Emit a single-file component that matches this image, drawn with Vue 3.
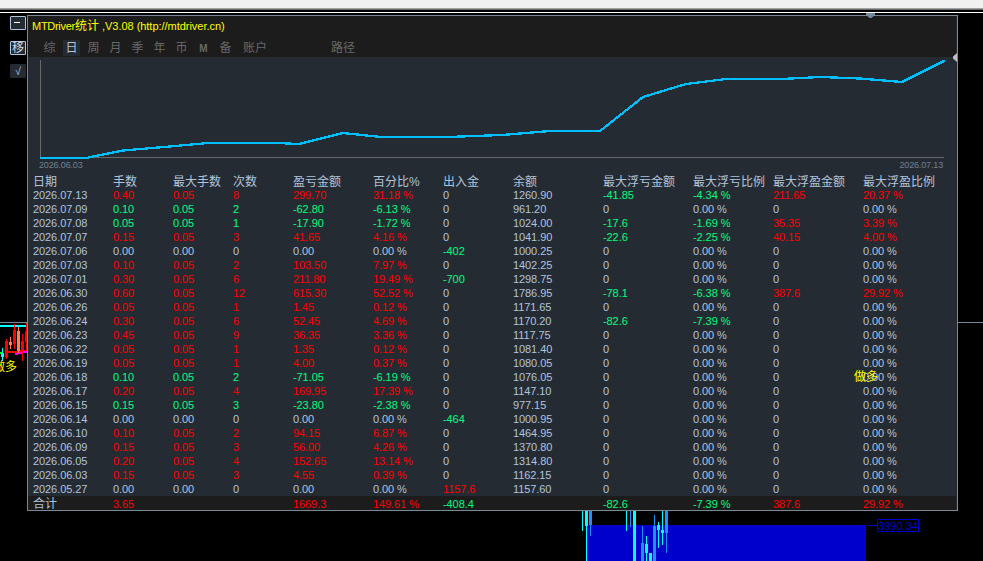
<template>
  <div class="terminal">
    <div class="toolbar-edge"></div>

    <svg class="market" width="983" height="561" shape-rendering="crispEdges">
      <rect x="0" y="322" width="983" height="1" fill="#778899" />
      <rect x="0" y="325" width="28" height="2" fill="#00ffff" />
      <rect x="587" y="525" width="279" height="36" fill="#0000cd" />
      <rect x="867" y="525" width="10" height="1" fill="#0000cd" />
      <path d="M8 352.5L27 350.5" stroke="#ff0000" stroke-width="2" />
      <path d="M15 354L20 353L28 351.5" fill="none" stroke="#ff00ff" stroke-width="2" />
      <rect x="0" y="352" width="3" height="2" fill="#00ff00" />
      <g v-for="(c, i) in candles" :key="i" :fill="c[0]">
        <rect :x="c[1] + 1" :y="c[4]" width="1" :height="c[5] - c[4]" />
        <rect v-if="c[3] > c[2]" :x="c[1]" :y="c[2]" width="3" :height="c[3] - c[2]" />
      </g>
    </svg>
    <span class="mark mark-left">做多</span>
    <span class="price">3990.34</span>

    <div class="side">
      <button class="side-btn"><i class="minus"></i></button>
      <button class="side-btn move">移</button>
      <button class="side-btn check">√</button>
    </div>

    <section class="panel">
      <header class="head">
        <div class="title"><span class="brand">MTDriver</span><span class="cn">统计</span> ,V3.08 (http://mtdriver.cn)</div>
        <nav class="tabs">
          <span
            v-for="tab in tabs"
            :key="tab"
            class="tab"
            :class="{ active: tab === current, wide: tab.length > 1, latin: tab === 'M' }"
            @click="current = tab"
          >{{ tab }}</span>
          <span class="tab path">路径</span>
        </nav>
      </header>

      <div class="chart">
        <svg class="curve" width="929" height="103" viewBox="28 57 929 103" shape-rendering="crispEdges">
          <rect x="40" y="60" width="1" height="98" fill="#696969" />
          <rect x="40" y="157" width="904" height="1" fill="#696969" />
          <polyline :points="curve" fill="none" stroke="#00bfff" stroke-width="2.3" />
        </svg>
        <div class="range">
          <span>2026.06.03</span>
          <span>2026.07.13</span>
        </div>
      </div>

      <div class="row columns">
        <span v-for="col in columns" :key="col">{{ col }}</span>
      </div>
      <div v-for="row in rows" :key="row[0]" class="row">
        <span v-for="(cell, i) in row" :key="i" :class="tone(row, i)">{{ cell }}</span>
      </div>
      <div class="row total">
        <span v-for="(cell, i) in total" :key="i" :class="tone(total, i)">{{ cell }}</span>
      </div>
    </section>

    <svg class="pins" width="983" height="80">
      <path d="M866 13H875V15L871.5 18H869.5L866 15Z" fill="#778899" />
      <path d="M957 53V62L953 58.5V56.5Z" fill="#c0c0c0" />
    </svg>
    <span class="mark mark-right">做多</span>
  </div>
</template>

<script setup>
import { ref } from 'vue'

const current = ref('日')
const tabs = ['综', '日', '周', '月', '季', '年', '币', 'M', '备', '账户']

const columns = [
  '日期', '手数', '最大手数', '次数', '盈亏金额', '百分比%', '出入金', '余额',
  '最大浮亏金额', '最大浮亏比例', '最大浮盈金额', '最大浮盈比例'
]

const rows = [
  '2026.07.13|0.40|0.05|8|299.70|31.18 %|0|1260.90|-41.85|-4.34 %|211.65|20.37 %',
  '2026.07.09|0.10|0.05|2|-62.80|-6.13 %|0|961.20|0|0.00 %|0|0.00 %',
  '2026.07.08|0.05|0.05|1|-17.90|-1.72 %|0|1024.00|-17.6|-1.69 %|35.35|3.39 %',
  '2026.07.07|0.15|0.05|3|41.65|4.16 %|0|1041.90|-22.6|-2.25 %|40.15|4.00 %',
  '2026.07.06|0.00|0.00|0|0.00|0.00 %|-402|1000.25|0|0.00 %|0|0.00 %',
  '2026.07.03|0.10|0.05|2|103.50|7.97 %|0|1402.25|0|0.00 %|0|0.00 %',
  '2026.07.01|0.30|0.05|6|211.80|19.49 %|-700|1298.75|0|0.00 %|0|0.00 %',
  '2026.06.30|0.60|0.05|12|615.30|52.52 %|0|1786.95|-78.1|-6.38 %|387.6|29.92 %',
  '2026.06.26|0.05|0.05|1|1.45|0.12 %|0|1171.65|0|0.00 %|0|0.00 %',
  '2026.06.24|0.30|0.05|6|52.45|4.69 %|0|1170.20|-82.6|-7.39 %|0|0.00 %',
  '2026.06.23|0.45|0.05|9|36.35|3.36 %|0|1117.75|0|0.00 %|0|0.00 %',
  '2026.06.22|0.05|0.05|1|1.35|0.12 %|0|1081.40|0|0.00 %|0|0.00 %',
  '2026.06.19|0.05|0.05|1|4.00|0.37 %|0|1080.05|0|0.00 %|0|0.00 %',
  '2026.06.18|0.10|0.05|2|-71.05|-6.19 %|0|1076.05|0|0.00 %|0|0.00 %',
  '2026.06.17|0.20|0.05|4|169.95|17.39 %|0|1147.10|0|0.00 %|0|0.00 %',
  '2026.06.15|0.15|0.05|3|-23.80|-2.38 %|0|977.15|0|0.00 %|0|0.00 %',
  '2026.06.14|0.00|0.00|0|0.00|0.00 %|-464|1000.95|0|0.00 %|0|0.00 %',
  '2026.06.10|0.10|0.05|2|94.15|6.87 %|0|1464.95|0|0.00 %|0|0.00 %',
  '2026.06.09|0.15|0.05|3|56.00|4.26 %|0|1370.80|0|0.00 %|0|0.00 %',
  '2026.06.05|0.20|0.05|4|152.65|13.14 %|0|1314.80|0|0.00 %|0|0.00 %',
  '2026.06.03|0.15|0.05|3|4.55|0.39 %|0|1162.15|0|0.00 %|0|0.00 %',
  '2026.05.27|0.00|0.00|0|0.00|0.00 %|1157.6|1157.60|0|0.00 %|0|0.00 %'
].map(line => line.split('|'))

const total = ['合计', '3.65', '', '', '1669.3', '149.61 %', '-408.4', '', '-82.6', '-7.39 %', '387.6', '29.92 %']

// lots and counts follow the sign of the day's profit
function tone(row, i) {
  if (i === 0 || i === 7) return ''
  const value = parseFloat(i < 4 ? row[4] : row[i])
  if (value > 0) return 'up'
  return value < 0 ? 'down' : ''
}

const curve =
  '40,158 86,158 123,150.5 164,147 208,143 277,143 299,144 343,133 381,137 448,137 502,135 550,131 ' +
  '600,131 643,97 686,84 726,79 782,79 820,77 860,78.5 902,82 945,60.5'

// color, x, body top, body bottom, wick top, wick bottom
const candles = [
  ['#00ffff', 1, 353, 357, 348, 361],
  ['#ff0000', 5, 341, 357, 339, 359],
  ['#ff7f50', 9, 342, 345, 337, 349],
  ['#ff0000', 13, 330, 344, 324, 349],
  ['#ff7f50', 17, 331, 351, 327, 353],
  ['#ff0000', 21, 341, 350, 334, 361],
  ['#ff0000', 25, 331, 342, 323, 350],
  ['#00ffff', 581, 0, 0, 511, 531],
  ['#00ffff', 585, 511, 526, 511, 561],
  ['#1e90ff', 589, 511, 525, 511, 536],
  ['#00ffff', 625, 0, 0, 511, 531],
  ['#1e90ff', 629, 0, 0, 511, 527],
  ['#00ffff', 633, 511, 561, 511, 561],
  ['#1e90ff', 641, 543, 561, 526, 561],
  ['#00ffff', 645, 544, 553, 536, 561],
  ['#00ffff', 649, 553, 561, 553, 561],
  ['#1e90ff', 653, 526, 561, 515, 561],
  ['#00ffff', 657, 525, 530, 522, 548],
  ['#00ffff', 661, 530, 533, 511, 545],
  ['#1e90ff', 665, 511, 533, 511, 553]
]
</script>

<style>
body {
  background: #000;
  overflow: hidden;
}
</style>

<style scoped>
.terminal {
  position: relative;
  width: 983px;
  height: 561px;
  overflow: hidden;
  background: #000;
  color: #b0c4de;
  font: 11px/14px "Liberation Sans", "Noto Sans CJK SC", sans-serif;
  white-space: nowrap;
}
.toolbar-edge {
  box-sizing: border-box;
  height: 13px;
  border-bottom: 1px solid #fff;
  background: linear-gradient(#f0f0f0 8px, #a0a0a0 8px, #a0a0a0 9px, #696969 9px, #696969 10px, #000 10px);
}
.market,
.pins {
  position: absolute;
  left: 0;
  top: 0;
  pointer-events: none;
}

.mark {
  position: absolute;
  color: #ff0;
  font-size: 12px;
}
.mark-left {
  left: -7px;
  top: 360px;
}
.mark-right {
  left: 854px;
  top: 370px;
}
.price {
  position: absolute;
  left: 877px;
  top: 519px;
  box-sizing: border-box;
  width: 42px;
  height: 13px;
  border: 1px solid #0000cd;
  background: #000;
  color: #0000cd;
  line-height: 12px;
  text-align: center;
}

.side {
  position: absolute;
  left: 10px;
  top: 16px;
  display: flex;
  flex-direction: column;
}
.side-btn {
  display: flex;
  justify-content: center;
  box-sizing: border-box;
  width: 16px;
  height: 14px;
  margin: 0 0 11px;
  padding: 0;
  border: 1px solid #b0c4de;
  border-radius: 1px;
  background: #252b33;
  color: #d0dbe8;
  font: 12px/13px "Liberation Sans", "Noto Sans CJK SC", sans-serif;
}
.side-btn.move {
  margin-bottom: 9px;
}
.side-btn.check {
  border-color: #252b33;
  color: #b0c4de;
  font-size: 11px;
}
.minus {
  width: 6px;
  height: 1px;
  margin: 5px 3px 0 0;
  background: #fff;
}

.panel {
  position: absolute;
  left: 27px;
  top: 15px;
  box-sizing: border-box;
  width: 931px;
  height: 496px;
  border: 1px solid #778899;
  background: #252b33;
}
.head {
  height: 41px;
  margin-right: 1px;
  background: #1c1c1c;
}
.title {
  height: 24px;
  padding-left: 4px;
  color: #ff0;
  line-height: 21px;
  letter-spacing: -0.03px;
}
.title .brand {
  display: inline-block;
  width: 43px;
  letter-spacing: -0.28px;
}
.title .cn {
  font-size: 12px;
}
.tabs {
  display: flex;
  padding-left: 13px;
}
.tab {
  width: 17px;
  height: 16px;
  margin-right: 5px;
  border-radius: 1px;
  color: #696969;
  font-size: 12px;
  line-height: 17px;
  text-align: center;
  cursor: default;
}
.tab.active {
  background: #252b33;
  color: #b0c4de;
}
.tab.latin {
  font-size: 10px;
  font-weight: bold;
}
.tab.wide {
  width: 28px;
  margin-left: 2px;
}
.tab.path {
  width: 28px;
  margin-left: 55px;
}

.chart {
  height: 117px;
}
.curve {
  display: block;
}
.range {
  display: flex;
  justify-content: space-between;
  padding: 0 14px 0 11px;
  color: #708090;
  font-size: 9px;
  line-height: 10px;
  letter-spacing: -0.15px;
}

.row {
  display: grid;
  grid-template-columns: 80px 60px 60px 60px 80px 70px 70px 90px 90px 80px 90px 1fr;
  height: 14px;
  padding-left: 5px;
  letter-spacing: -0.08px;
}
.columns {
  font-size: 12px;
  line-height: 16px;
  letter-spacing: 0;
}
.up {
  color: #f00;
}
.down {
  color: #00ff7f;
}
.total {
  margin-right: 1px;
  background: #1c1c1c;
  line-height: 16px;
}
.total span:first-child {
  font-size: 12px;
}
</style>
